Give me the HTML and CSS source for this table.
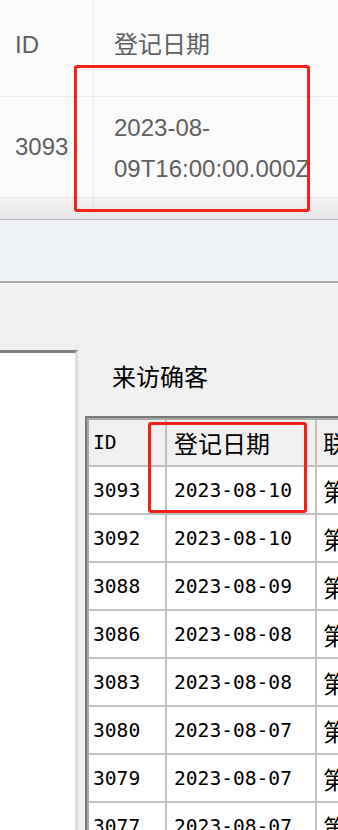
FILE: index.html
```html
<!DOCTYPE html>
<html lang="zh-CN">
<head>
    <meta charset="UTF-8">
    <meta name="viewport" content="width=device-width, initial-scale=1.0">
    <title>来访确客</title>
    <link rel="stylesheet" href="styles.css">
</head>
<body>
    <div class="page">
        <!-- web list view -->
        <div class="web-table">
            <div class="web-head">
                <div class="web-id">ID</div>
                <div class="web-date">登记日期</div>
            </div>
            <div class="web-row">
                <div class="web-id web-id-cell">3093</div>
                <div class="web-date web-date-cell"><span class="date-wrap">2023-08-09T16:00:00.000Z</span></div>
            </div>
            <div class="web-row-next">
                <div class="web-id"></div>
                <div class="web-date"></div>
            </div>
            <div class="mark mark-web"></div>
        </div>
        <div class="web-footer"></div>

        <!-- desktop client view -->
        <div class="client">
            <div class="side-panel"></div>
            <div class="client-main">
                <div class="client-title">来访确客</div>
                <div class="grid-frame">
                    <table class="grid">
                        <thead>
                            <tr>
                                <th class="g-id">ID</th>
                                <th class="g-date">登记日期</th>
                                <th class="g-name">联</th>
                            </tr>
                        </thead>
                        <tbody>
                            <tr><td class="g-id">3093</td><td class="g-date">2023-08-10</td><td class="g-name">第</td></tr>
                            <tr><td class="g-id">3092</td><td class="g-date">2023-08-10</td><td class="g-name">第</td></tr>
                            <tr><td class="g-id">3088</td><td class="g-date">2023-08-09</td><td class="g-name">第</td></tr>
                            <tr><td class="g-id">3086</td><td class="g-date">2023-08-08</td><td class="g-name">第</td></tr>
                            <tr><td class="g-id">3083</td><td class="g-date">2023-08-08</td><td class="g-name">第</td></tr>
                            <tr><td class="g-id">3080</td><td class="g-date">2023-08-07</td><td class="g-name">第</td></tr>
                            <tr><td class="g-id">3079</td><td class="g-date">2023-08-07</td><td class="g-name">第</td></tr>
                            <tr><td class="g-id">3077</td><td class="g-date">2023-08-07</td><td class="g-name">第</td></tr>
                        </tbody>
                    </table>
                    <div class="mark mark-grid"></div>
                </div>
            </div>
        </div>
    </div>
</body>
</html>
```

FILE: styles.css
```css
* {
    margin: 0;
    padding: 0;
    box-sizing: border-box;
}

body {
    width: 338px;
    height: 830px;
    overflow: hidden;
    background: #f0f0f0;
}

.page {
    display: flex;
    flex-direction: column;
    height: 830px;
}

/* ---- web table ---- */

.web-table {
    position: relative;
    flex-shrink: 0;
    background: #fafafa;
    font-family: "Liberation Sans", Arial, "Noto Sans CJK SC", sans-serif;
    font-size: 24px;
    line-height: 28px;
    color: #5f5f5f;
}

.web-head,
.web-row,
.web-row-next {
    display: flex;
}

.web-head {
    height: 97px;
    border-bottom: 1px solid #ebebeb;
}

.web-id {
    width: 94px;
    padding-left: 15px;
    border-right: 1px solid #ececec;
}

.web-date {
    flex: 1;
    padding-left: 20px;
}

.web-head .web-id,
.web-head .web-date {
    padding-top: 31px;
}

.web-row {
    height: 101px;
    border-bottom: 1px solid #e4e4e4;
}

.web-id-cell {
    padding-top: 36px;
}

.web-date-cell {
    padding-top: 10px;
    line-height: 41px;
}

.date-wrap {
    display: block;
    width: 205px;
}

.web-row-next {
    height: 22px;
    background: linear-gradient(#f3f3f3, #e7e7e7);
    border-bottom: 1px solid #b4b4b4;
}

.web-row-next .web-id {
    border-right-color: #e2e2e2;
}

.web-footer {
    flex-shrink: 0;
    height: 63px;
    background: #eef2f6;
    border-bottom: 2px solid #a9a9a9;
    box-shadow: 0 1px 0 #ffffff;
    margin-bottom: 1px;
}

/* ---- red annotation boxes ---- */

.mark {
    position: absolute;
    border: 3px solid #f5201a;
    border-radius: 3px;
    pointer-events: none;
}

.mark-web {
    left: 74px;
    top: 65px;
    width: 236px;
    height: 147px;
}

.mark-grid {
    left: 61px;
    top: 4px;
    width: 159px;
    height: 91px;
}

/* ---- client window ---- */

.client {
    flex: 1;
    min-height: 0;
    display: flex;
    font-family: "DejaVu Sans Mono", "Noto Sans CJK SC", monospace;
    color: #000;
}

.side-panel {
    width: 78px;
    margin-top: 66px;
    background: #fff;
    border-top: 3px solid #7e7e7e;
    border-right: 3px solid #dedede;
}

.client-main {
    flex: 1;
    padding-left: 7px;
    overflow: hidden;
}

.client-title {
    margin: 80px 0 28px 27px;
    font-family: "Noto Sans CJK SC", sans-serif;
    font-size: 24px;
    line-height: 24px;
}

.grid-frame {
    position: relative;
    width: 300px;
    border-top: 2px solid #7a7a7a;
    border-left: 2px solid #7a7a7a;
    padding: 2px 0 0 2px;
    background: #a9a9a9;
}

.grid {
    border-collapse: separate;
    border-spacing: 0;
    background: #fff;
    font-size: 19.6px;
    text-align: left;
}

.grid th,
.grid td {
    height: 48px;
    padding: 0 0 0 6px;
    border-right: 2px solid #c0c0c0;
    border-bottom: 2px solid #c0c0c0;
    font-weight: normal;
    white-space: nowrap;
    vertical-align: middle;
}

.grid th {
    height: 47px;
    background: #f0f0f0;
}

.grid .g-id {
    width: 78px;
    padding-left: 4px;
}

.grid .g-date {
    width: 150px;
    padding-left: 7px;
}

.grid th.g-date,
.grid .g-name {
    font-family: "Noto Sans CJK SC", sans-serif;
    font-size: 24px;
}

.grid .g-name {
    width: 60px;
    border-right: none;
}
```
